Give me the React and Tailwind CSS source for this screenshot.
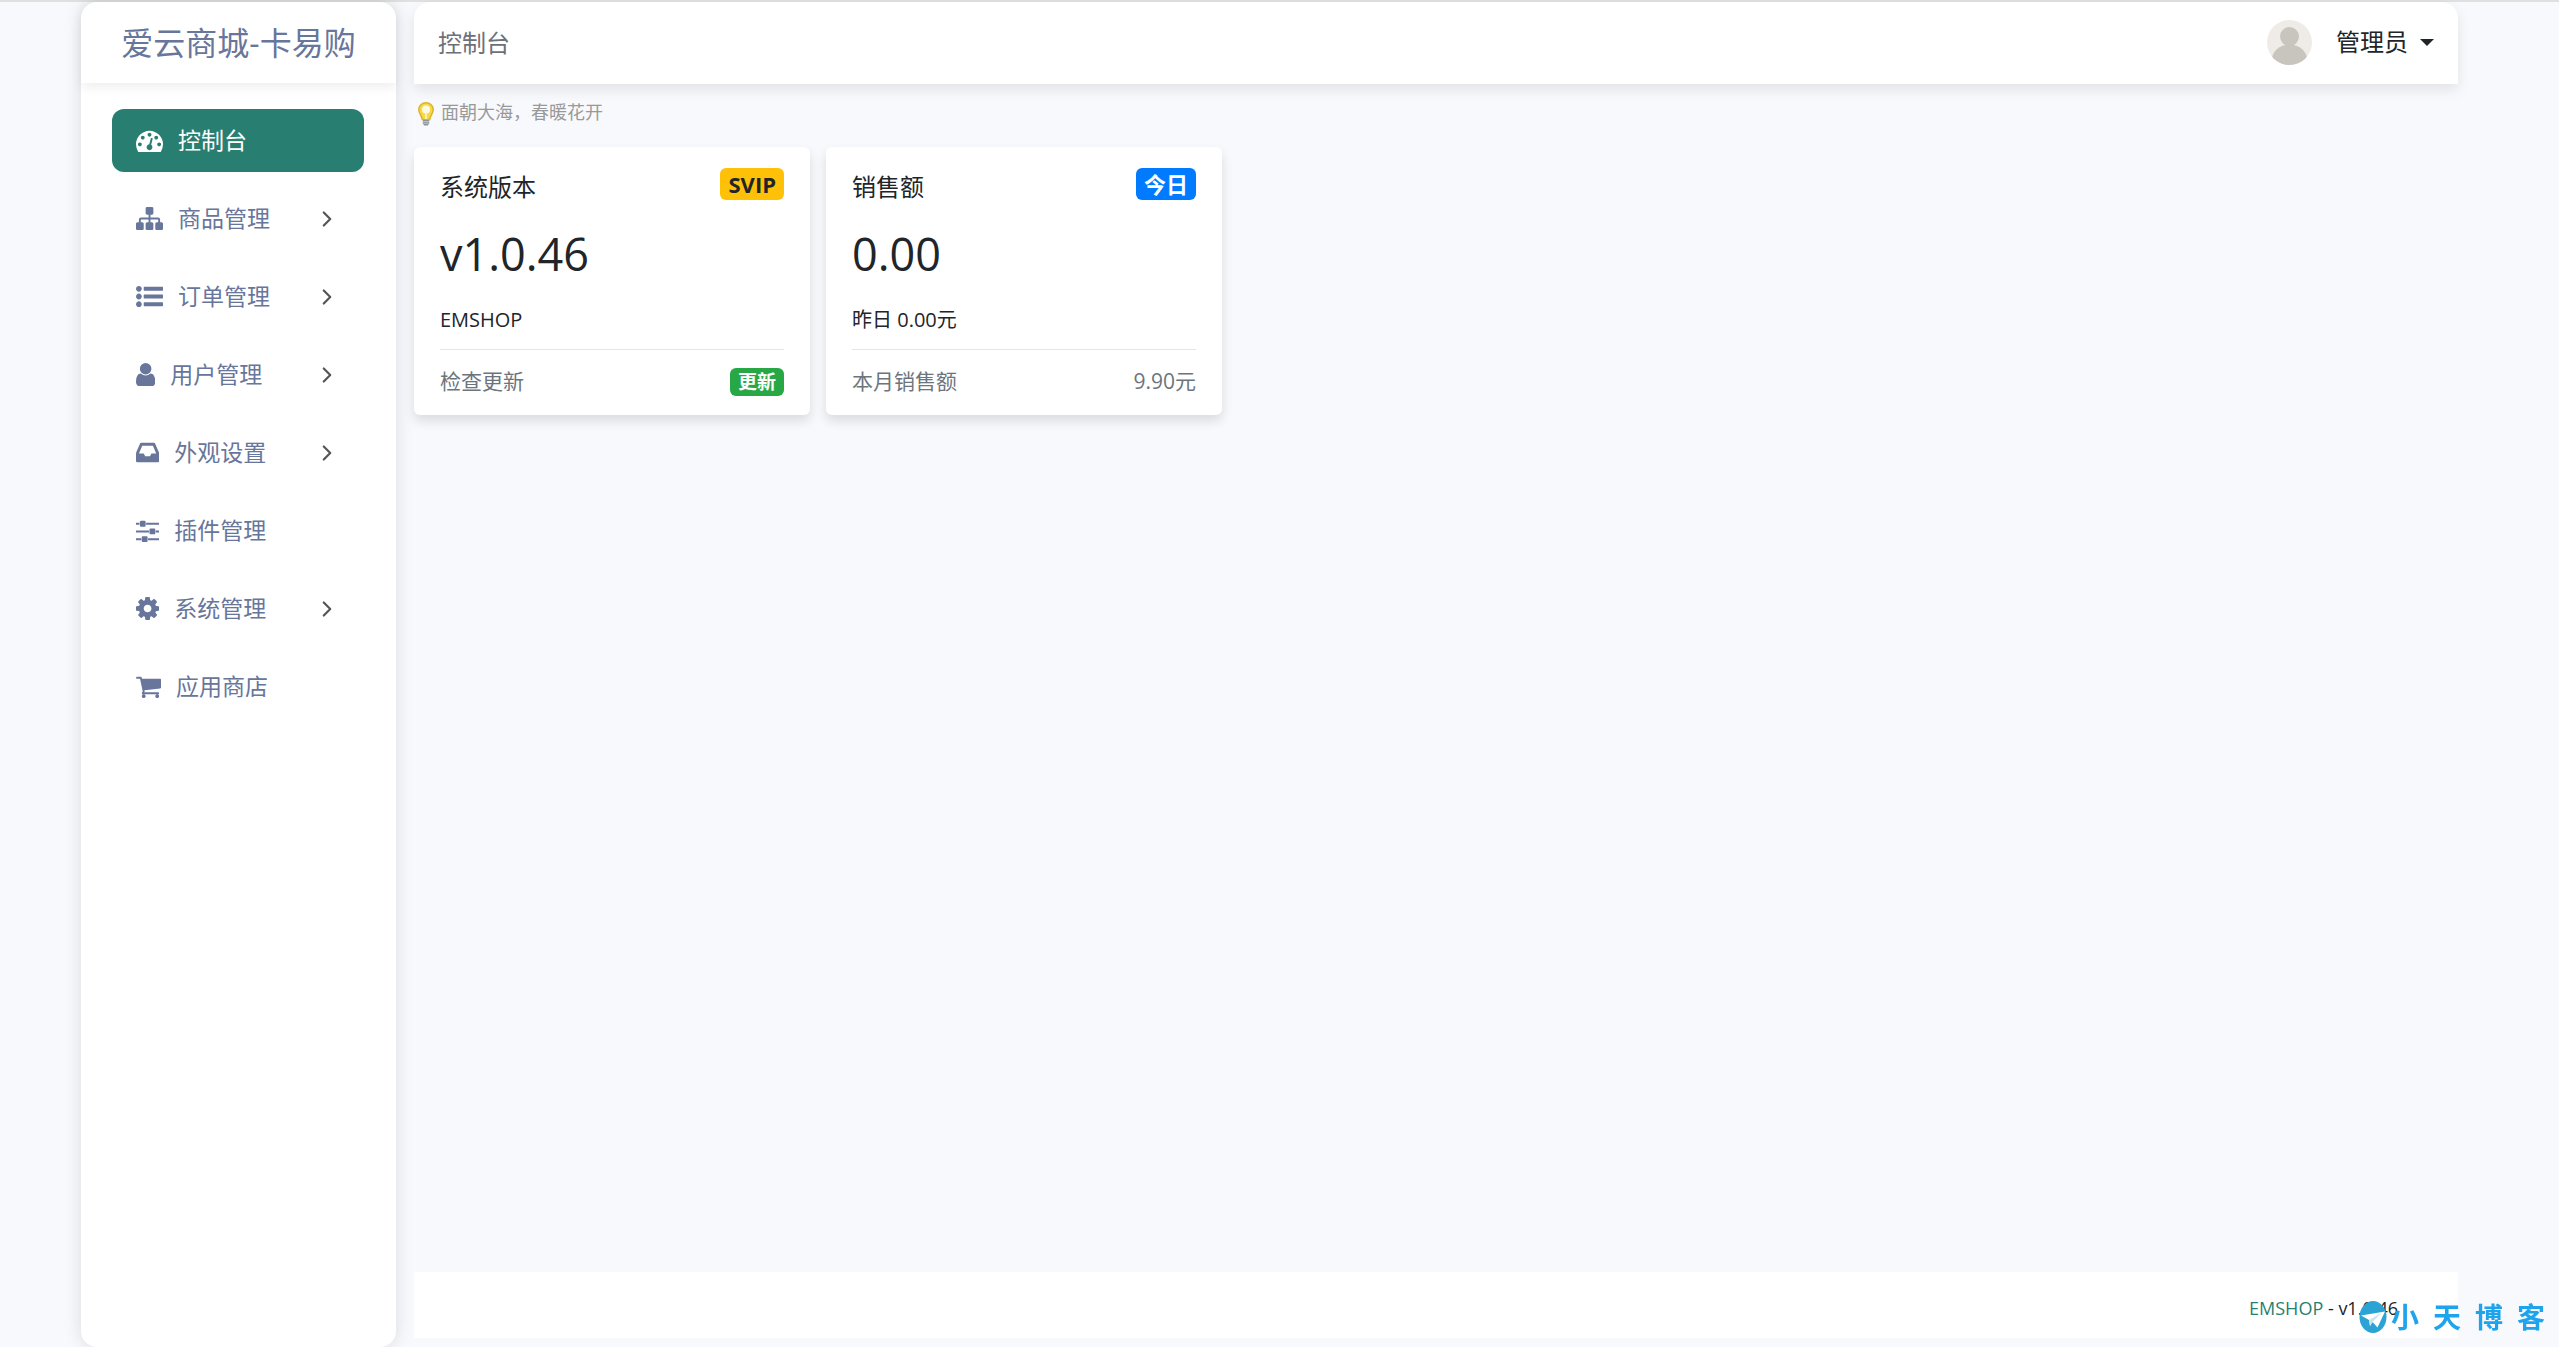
import { FiChevronRight } from "react-icons/fi"

// Font Awesome 4 outlines, drawn on a 1792 grid. x / w trim the side bearings.
var icons = {
  dashboard: { x: 0, w: 1792, d: 'M384 1152q0-53-37.5-90.5t-90.5-37.5-90.5 37.5-37.5 90.5 37.5 90.5 90.5 37.5 90.5-37.5 37.5-90.5zm192-448q0-53-37.5-90.5t-90.5-37.5-90.5 37.5-37.5 90.5 37.5 90.5 90.5 37.5 90.5-37.5 37.5-90.5zm428 481l101-382q6-26-7.5-48.5t-38.5-29.5-48 6.5-30 39.5l-101 382q-60 5-107 43.5t-63 98.5q-20 77 20 146t117 89 146-20 89-117q16-60-6-117t-72-91zm660-33q0-53-37.5-90.5t-90.5-37.5-90.5 37.5-37.5 90.5 37.5 90.5 90.5 37.5 90.5-37.5 37.5-90.5zm-640-640q0-53-37.5-90.5t-90.5-37.5-90.5 37.5-37.5 90.5 37.5 90.5 90.5 37.5 90.5-37.5 37.5-90.5zm448 192q0-53-37.5-90.5t-90.5-37.5-90.5 37.5-37.5 90.5 37.5 90.5 90.5 37.5 90.5-37.5 37.5-90.5zm320 448q0 261-141 483-19 29-54 29h-1402q-35 0-54-29-141-221-141-483 0-182 71-348t191-286 286-191 348-71 348 71 286 191 191 286 71 348z' },
  sitemap: { x: 0, w: 1792, d: 'M1792 1248v320q0 40-28 68t-68 28h-320q-40 0-68-28t-28-68v-320q0-40 28-68t68-28h96v-192h-512v192h96q40 0 68 28t28 68v320q0 40-28 68t-68 28h-320q-40 0-68-28t-28-68v-320q0-40 28-68t68-28h96v-192h-512v192h96q40 0 68 28t28 68v320q0 40-28 68t-68 28h-320q-40 0-68-28t-28-68v-320q0-40 28-68t68-28h96v-192q0-52 38-90t90-38h512v-192h-96q-40 0-68-28t-28-68v-320q0-40 28-68t68-28h320q40 0 68 28t28 68v320q0 40-28 68t-68 28h-96v192h512q52 0 90 38t38 90v192h96q40 0 68 28t28 68z' },
  list: { x: 0, w: 1792, d: 'M384 1408q0 80-56 136t-136 56-136-56-56-136 56-136 136-56 136 56 56 136zM384 896q0 80-56 136t-136 56-136-56-56-136 56-136 136-56 136 56 56 136zM384 384q0 80-56 136t-136 56-136-56-56-136 56-136 136-56 136 56 56 136zM544 1280h1216q32 0 32 32v192q0 32-32 32h-1216q-32 0-32-32v-192q0-32 32-32zM544 768h1216q32 0 32 32v192q0 32-32 32h-1216q-32 0-32-32v-192q0-32 32-32zM544 256h1216q32 0 32 32v192q0 32-32 32h-1216q-32 0-32-32v-192q0-32 32-32z' },
  user: { x: 256, w: 1280, d: 'M1536 1399q0 109-62.5 187t-150.5 78h-854q-88 0-150.5-78t-62.5-187q0-85 8.5-160.5t31.5-152 58.5-131 94-89 134.5-34.5q131 128 313 128t313-128q76 0 134.5 34.5t94 89 58.5 131 31.5 152 8.5 160.5zm-256-887q0 159-112.5 271.5t-271.5 112.5-271.5-112.5-112.5-271.5 112.5-271.5 271.5-112.5 271.5 112.5 112.5 271.5z' },
  inbox: { x: 128, w: 1536, d: 'M1151 960h316q-1-3-2.5-8t-2.5-8l-212-496h-708l-212 496q-1 2-2.5 8t-2.5 8h316l95 192h320zm513 30v482q0 26-19 45t-45 19h-1408q-26 0-45-19t-19-45v-482q0-62 25-123l238-552q10-25 36.5-42t52.5-17h832q26 0 52.5 17t36.5 42l238 552q25 61 25 123z' },
  sliders: { x: 128, w: 1536, d: 'M480 1408v128h-352v-128h352zm352-128q26 0 45 19t19 45v256q0 26-19 45t-45 19h-256q-26 0-45-19t-19-45v-256q0-26 19-45t45-19h256zm160-384v128h-864v-128h864zm-640-512v128h-224v-128h224zm1312 1024v128h-736v-128h736zm-960-1152q26 0 45 19t19 45v256q0 26-19 45t-45 19h-256q-26 0-45-19t-19-45v-256q0-26 19-45t45-19h256zm640 512q26 0 45 19t19 45v256q0 26-19 45t-45 19h-256q-26 0-45-19t-19-45v-256q0-26 19-45t45-19h256zm320 128v128h-224v-128h224zm0-512v128h-864v-128h864z' },
  cog: { x: 128, w: 1536, d: 'M1152 896q0-106-75-181t-181-75-181 75-75 181 75 181 181 75 181-75 75-181zm512-109v222q0 12-8 23t-20 13l-185 28q-19 54-39 91 35 50 107 138 10 12 10 25t-9 23q-27 37-99 108t-94 71q-12 0-26-9l-138-108q-44 23-91 38-16 136-29 186-7 28-36 28h-222q-14 0-24.5-8.5t-11.5-21.5l-28-184q-49-16-90-37l-141 107q-10 9-25 9-14 0-25-11-126-114-165-168-7-10-7-23 0-12 8-23 15-21 51-66.500t54-70.5q-27-50-41-99l-183-27q-13-2-21-12.500t-8-23.500v-222q0-12 8-23t19-13l186-28q14-46 39-92-40-57-107-138-10-12-10-24 0-10 9-23 26-36 98.500-107.500t94.500-71.500q13 0 26 10l138 107q44-23 91-38 16-136 29-186 7-28 36-28h222q14 0 24.500 8.500t11.500 21.500l28 184q49 16 90 37l142-107q9-9 24-9 13 0 25 10 129 119 165 170 7 8 7 22 0 12-8 23-15 21-51 66.500t-54 70.500q26 50 41 98l183 28q13 2 21 12.500t8 23.500z' },
  cart: { x: 64, w: 1664, d: 'M704 1536q0 52-38 90t-90 38-90-38-38-90 38-90 90-38 90 38 38 90zm896 0q0 52-38 90t-90 38-90-38-38-90 38-90 90-38 90 38 38 90zm128-1088v512q0 24-16.500 42.500t-40.500 21.500l-1044 122q13 60 13 70 0 16-24 64h920q26 0 45 19t19 45-19 45-45 19h-1024q-26 0-45-19t-19-45q0-11 8-31.500t16-36 21.500-40 15.500-29.500l-177-823h-204q-26 0-45-19t-19-45 19-45 45-19h256q16 0 28.500 6.500t19.500 15.500 13 24.500 8 26 5.500 29.500 4.500 26h1201q26 0 45 19t19 45z' },
}

var menu = [
  { label: '控制台', icon: 'dashboard', active: true },
  { label: '商品管理', icon: 'sitemap', sub: true },
  { label: '订单管理', icon: 'list', sub: true },
  { label: '用户管理', icon: 'user', sub: true },
  { label: '外观设置', icon: 'inbox', sub: true },
  { label: '插件管理', icon: 'sliders' },
  { label: '系统管理', icon: 'cog', sub: true },
  { label: '应用商店', icon: 'cart' },
]

function Icon({ name }) {
  var i = icons[name]
  return <svg className="h-[27px] w-auto shrink-0" viewBox={`${i.x} 0 ${i.w} 1792`} fill="currentColor" aria-hidden="true"><path d={i.d} /></svg>
}

function Sidebar() {
  return (
    <aside className="w-[315px] shrink-0 bg-white rounded-2xl shadow-[0_0_18px_rgba(0,0,0,0.12)]">
      <div className="h-[81px] flex items-center justify-center rounded-t-2xl shadow-[0_4px_12px_rgba(0,0,0,0.07)]">
        <a href="#" className="text-[32px] leading-10 text-[#67769a]">爱云商城-卡易购</a>
      </div>
      <nav className="flex flex-col gap-[15px] pl-[31px] pr-8 pt-[26px]">
        {menu.map(m => (
          <a key={m.label} href="#" className={`flex items-center h-[63px] pl-6 pr-6 gap-[15px] rounded-xl text-[23px] ${m.active ? 'bg-[#287f71] text-white' : 'text-[#67769a]'}`}>
            <Icon name={m.icon} />
            <span>{m.label}</span>
            {m.sub && <FiChevronRight className="ml-auto size-[26px] text-[#555]" />}
          </a>
        ))}
      </nav>
    </aside>
  )
}

function Topbar() {
  return (
    <header className="h-[82px] flex items-center justify-between px-6 bg-white rounded-t-2xl shadow-[0_6px_14px_rgba(0,0,0,0.09)]">
      <h1 className="text-2xl text-[#6c7078]">控制台</h1>
      <button type="button" className="flex items-center pb-[2px] cursor-pointer text-2xl text-[#212529]">
        <svg className="size-[45px] mr-6" viewBox="0 0 45 45" aria-hidden="true">
          <clipPath id="avatar"><circle cx="22.5" cy="22.5" r="22.5" /></clipPath>
          <g clipPath="url(#avatar)">
            <rect width="45" height="45" fill="#efece8" />
            <circle cx="22.5" cy="16.5" r="9.5" fill="#c8c4be" />
            <ellipse cx="22.5" cy="41" rx="18" ry="16.5" fill="#c8c4be" />
          </g>
        </svg>
        管理员
        <svg className="w-[14px] h-[7px] ml-3" viewBox="0 0 14 7" fill="currentColor" aria-hidden="true"><path d="M0 0h14L7 7z" /></svg>
      </button>
    </header>
  )
}

function Bulb() {
  return (
    <svg className="w-4 h-6" viewBox="0 0 16 24" aria-hidden="true">
      <path d="M8 .8C3.8.8.8 3.9.8 7.7c0 3.5 2.6 5.3 3.5 9.8h7.4c.9-4.500 3.500-6.300 3.500-9.800C15.200 3.900 12.200.8 8 .8z" fill="#f8d84a" stroke="#d9b62c" strokeWidth="1.5" />
      <circle cx="8" cy="7.5" r="4" fill="#fffbe0" />
      <path d="M7 11v6h2v-6z" fill="#fdf3a8" />
      <path d="M4.8 18h6.4v3.5L9.8 23.5H6.2L4.8 21.5z" fill="#8d9299" />
      <path d="M4.8 19.5h6.4M4.8 21.3h6.4" stroke="#d5d8dc" strokeWidth=".7" />
    </svg>
  )
}

function StatCard({ title, badge, badgeClass, value, note, footLabel, children }) {
  return (
    <section className="bg-white rounded-md px-[26px] shadow-[0_6px_12px_rgba(0,0,0,0.12)]">
      <div className="flex items-start justify-between pt-[21px]">
        <h2 className="text-2xl leading-[38px] text-[#212529]">{title}</h2>
        <span className={`h-8 px-2 rounded-md text-[22px] leading-8 font-bold ${badgeClass}`}>{badge}</span>
      </div>
      <p className="mt-[18px] text-[45px] leading-[60px] text-[#212529]">{value}</p>
      <p className="mt-5 h-[46px] text-[20px] leading-8 text-[#212529] border-b border-[#e3e5e8]">{note}</p>
      <div className="flex items-center justify-between h-[65px] pb-px text-[21px] text-[#6c757d]">
        <span>{footLabel}</span>
        {children}
      </div>
    </section>
  )
}

function Watermark() {
  return (
    <div className="fixed right-[14px] bottom-[14px] flex items-center gap-1 text-[#1ea4ec] pointer-events-none">
      <svg className="w-7 h-8" viewBox="0 0 28 32" aria-hidden="true">
        <ellipse cx="14" cy="16" rx="13.5" ry="16" fill="#2ba3d4" />
        <path d="M2 14.5L26 10.5 18.5 26.5 13.5 21 11 25 10 19z" fill="#fff" />
        <path d="M10 19l13-7.5-9.5 9.5L11 25z" fill="#cfe3ee" />
      </svg>
      <div className="flex gap-[14px] text-[28px] leading-8 font-bold">
        <span>小</span><span>天</span><span>博</span><span>客</span>
      </div>
    </div>
  )
}

export default function App() {
  return (
    <div className="min-h-screen flex gap-[18px] pl-[81px] pr-[101px] bg-[#f8f9fd] border-t-2 border-[#e0e0e0] font-['Open_Sans','Noto_Sans_CJK_SC',sans-serif]">
      <Sidebar />
      <div className="flex-1 min-w-0 flex flex-col">
        <Topbar />
        <main className="flex-1">
          <p className="flex items-center gap-[7px] h-[63px] px-1 pb-1 text-lg text-[#999]"><Bulb /><span className="pb-[3px]">面朝大海，春暖花开</span></p>
          <div className="grid grid-cols-5 gap-4">
            <StatCard title="系统版本" badge="SVIP" badgeClass="bg-[#ffc107] text-[#212529]" value="v1.0.46" note="EMSHOP" footLabel="检查更新">
              <button type="button" className="h-7 px-2 rounded-md bg-[#28a745] text-white text-[19px] leading-7 font-bold cursor-pointer">更新</button>
            </StatCard>
            <StatCard title="销售额" badge="今日" badgeClass="bg-[#007bff] text-white" value="0.00" note="昨日 0.00元" footLabel="本月销售额">
              <span>9.90元</span>
            </StatCard>
          </div>
        </main>
        <footer className="h-[66px] mb-[9px] pr-[60px] pt-[6px] flex items-center justify-end bg-white text-lg text-[#212529]">
          <span><a href="#" className="text-[#287f71]">EMSHOP</a> - v1.0.46</span>
        </footer>
      </div>
      <Watermark />
    </div>
  )
}
